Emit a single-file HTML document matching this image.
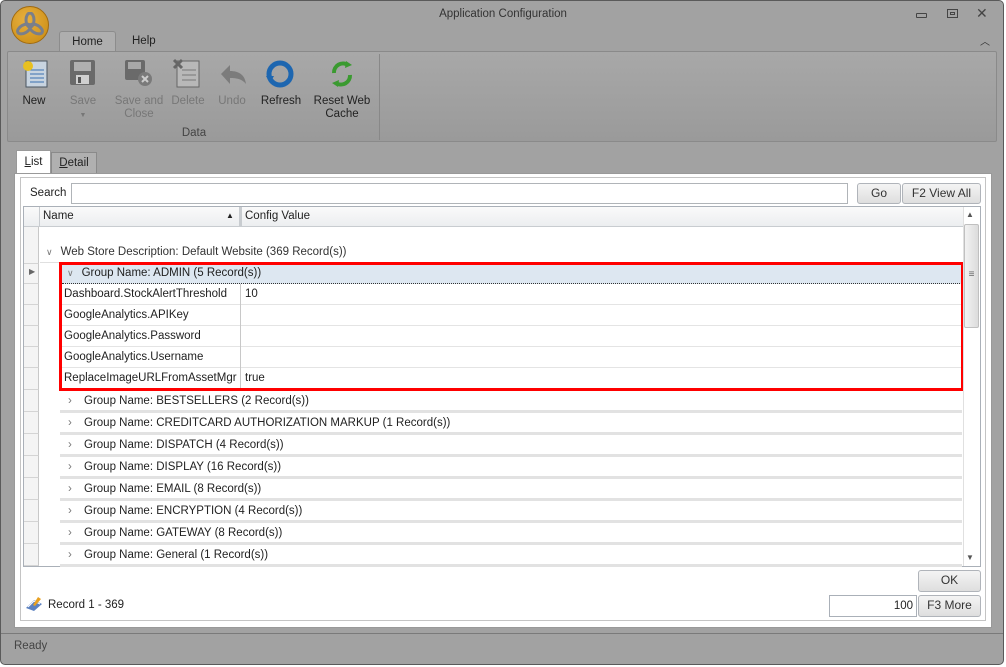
<!DOCTYPE html>
<html><head><style>
*{margin:0;padding:0;box-sizing:border-box}
body{width:1006px;height:667px;background:#fff;font-family:"Liberation Sans",sans-serif;font-size:11px;color:#222;position:relative;overflow:hidden}
.a{position:absolute}
.win{left:0;top:0;width:1004px;height:665px;background:#a2a2a2;border:1px solid #5a5a5a;border-radius:5px}
.btn{position:absolute;background:linear-gradient(#f4f4f4,#dedede);border:1px solid #b0b4ba;border-radius:3px;text-align:center;font-size:12px;color:#333;line-height:19px}
.rl{position:absolute;font-size:11.5px;text-align:center;line-height:13px}
.row{position:absolute;left:60px;width:902px;height:21px;border-bottom:1px solid #e4e4e4;font-size:11.5px;line-height:20px}
.grp{position:absolute;left:60px;width:902px;height:22px;border-bottom:3px solid #e2e2e2;font-size:11.5px;line-height:20px}
.ind{position:absolute;left:24px;width:15px;border-bottom:1px solid #d4d4d4;border-right:1px solid #c8c8c8;background:#f4f4f4}
</style></head><body>
<div class="a win"></div>
<!-- title -->
<div class="a" style="left:11px;top:6px;width:38px;height:38px;border-radius:50%;background:radial-gradient(circle at 40% 35%,#e8b040,#c88a10);border:1px solid #a06a10"></div>
<svg class="a" style="left:14px;top:12px" width="32" height="26" viewBox="0 0 32 26"><g fill="none" stroke="#7a7f8a" stroke-width="3"><ellipse cx="16" cy="8" rx="4" ry="7"/><ellipse cx="10" cy="17" rx="7" ry="4" transform="rotate(-30 10 17)"/><ellipse cx="22" cy="17" rx="7" ry="4" transform="rotate(30 22 17)"/></g></svg>
<div class="a" style="left:0;top:8px;width:1006px;text-align:center;font-size:11.5px;color:#333">Application Configuration</div>
<div class="a" style="left:916px;top:13px;width:11px;height:5px;border:1px solid #444;border-radius:1px"></div>
<div class="a" style="left:947px;top:9px;width:11px;height:9px;border:1px solid #444"><div style="margin:2px 2px;width:5px;height:3px;border:1px solid #444"></div></div>
<div class="a" style="left:976px;top:5px;font-size:14px;color:#444">✕</div>
<div class="a" style="left:980px;top:33px;font-size:10px;color:#333">︿</div>
<!-- tabs -->
<div class="a" style="left:59px;top:31px;width:57px;height:21px;background:#aeaeae;border:1px solid #8c8c8c;border-bottom:none;border-radius:3px 3px 0 0;text-align:center;line-height:20px;font-size:11.5px">Home</div>
<div class="a" style="left:132px;top:35px;font-size:11.5px">Help</div>
<!-- ribbon -->
<div class="a" style="left:7px;top:51px;width:990px;height:91px;background:linear-gradient(#a8a8a8,#9a9a9a);border:1px solid #8a8a8a;border-radius:2px"></div>
<div class="a" style="left:379px;top:54px;width:1px;height:86px;background:#888"></div>
<!-- icons -->
<svg class="a" style="left:19px;top:58px" width="32" height="32"><rect x="7" y="3" width="21" height="26" fill="#c8d4e0" stroke="#4a5560"/><g stroke="#3a70b0"><line x1="11" y1="12" x2="25" y2="12"/><line x1="11" y1="16" x2="25" y2="16"/><line x1="11" y1="20" x2="25" y2="20"/><line x1="11" y1="24" x2="25" y2="24"/></g><circle cx="9" cy="8" r="5" fill="#e8c020"/></svg>
<svg class="a" style="left:68px;top:58px" width="30" height="30"><rect x="2" y="2" width="25" height="25" rx="2" fill="#6a6a6a"/><rect x="6" y="4" width="17" height="9" fill="#b0b0b0"/><rect x="8" y="17" width="13" height="9" fill="#d0d0d0"/><rect x="10" y="19" width="3" height="6" fill="#555"/></svg>
<svg class="a" style="left:124px;top:58px" width="30" height="30"><rect x="1" y="2" width="20" height="20" rx="2" fill="#6a6a6a"/><rect x="4" y="4" width="13" height="7" fill="#a8a8a8"/><circle cx="21" cy="21" r="7" fill="#7a7a7a"/><path d="M18 18l6 6M24 18l-6 6" stroke="#ccc" stroke-width="2"/></svg>
<svg class="a" style="left:172px;top:58px" width="30" height="30"><rect x="5" y="3" width="22" height="26" fill="#b8b8b8" stroke="#666"/><g stroke="#777"><line x1="10" y1="12" x2="24" y2="12"/><line x1="10" y1="17" x2="24" y2="17"/><line x1="10" y1="22" x2="24" y2="22"/></g><path d="M2 2l8 8M10 2l-8 8" stroke="#666" stroke-width="3"/></svg>
<svg class="a" style="left:217px;top:62px" width="32" height="26"><path d="M4 12l9-9v6c9 0 15 4 16 13-4-5-9-6-16-6v6z" fill="#7c7c7c"/></svg>
<svg class="a" style="left:265px;top:59px" width="30" height="30"><circle cx="15" cy="15" r="11" fill="none" stroke="#1d66b0" stroke-width="5"/><path d="M1 17l8 0-4 7z" fill="#1d66b0"/></svg>
<svg class="a" style="left:326px;top:59px" width="32" height="30"><path d="M8 14a9 9 0 0 1 14-8" fill="none" stroke="#3a9a30" stroke-width="4"/><path d="M20 2l6 4-7 3z" fill="#3a9a30"/><path d="M24 16a9 9 0 0 1-14 8" fill="none" stroke="#3a9a30" stroke-width="4"/><path d="M12 28l-6-4 7-3z" fill="#3a9a30"/></svg>
<div class="rl" style="left:19px;top:95px;width:30px">New</div>
<div class="rl" style="left:66px;top:95px;width:34px;color:#777">Save<br><span style="font-size:7px">▼</span></div>
<div class="rl" style="left:114px;top:95px;width:50px;color:#777">Save and<br>Close</div>
<div class="rl" style="left:168px;top:95px;width:40px;color:#777">Delete</div>
<div class="rl" style="left:214px;top:95px;width:36px;color:#777">Undo</div>
<div class="rl" style="left:258px;top:95px;width:46px">Refresh</div>
<div class="rl" style="left:310px;top:95px;width:64px">Reset Web<br>Cache</div>
<div class="rl" style="left:174px;top:127px;width:40px;color:#444">Data</div>
<!-- doc tabs -->
<div class="a" style="left:16px;top:150px;width:35px;height:24px;background:#fff;border:1px solid #999;border-bottom:none;text-align:center;line-height:22px;font-size:11.5px"><u>L</u>ist</div>
<div class="a" style="left:51px;top:152px;width:46px;height:21px;background:#b0b0b0;border:1px solid #8a8a8a;border-bottom:none;text-align:center;line-height:20px;font-size:11.5px"><u>D</u>etail</div>
<div class="a" style="left:14px;top:173px;width:978px;height:455px;background:#fff;border:1px solid #999"></div>
<div class="a" style="left:20px;top:177px;width:966px;height:444px;border:1px solid #c4c4c4"></div>
<!-- search -->
<div class="a" style="left:30px;top:187px;font-size:11.5px">Search</div>
<div class="a" style="left:71px;top:183px;width:777px;height:21px;border:1px solid #b0b4b8"></div>
<div class="btn" style="left:857px;top:183px;width:44px;height:21px">Go</div>
<div class="btn" style="left:902px;top:183px;width:79px;height:21px">F2 View All</div>
<!-- grid -->
<div class="a" style="left:23px;top:206px;width:958px;height:361px;border:1px solid #aab0b8"></div>
<div class="a" style="left:24px;top:207px;width:939px;height:20px;background:linear-gradient(#fafafa,#eceef0);border-bottom:1px solid #c8ccd0"></div>
<div class="a" style="left:39px;top:207px;width:1px;height:20px;background:#c8ccd0"></div>
<div class="a" style="left:239px;top:207px;width:3px;height:20px;background:#c8ccd0"></div>
<div class="a" style="left:43px;top:210px;font-size:11.5px">Name</div>
<div class="a" style="left:226px;top:211px;font-size:8px">▲</div>
<div class="a" style="left:245px;top:210px;font-size:11.5px">Config Value</div>
<!-- indicator col -->
<div class="ind" style="top:227px;height:37px"></div>
<div class="ind" style="top:264px;height:20px"><span style="position:absolute;left:5px;top:3px;font-size:8px;color:#666">▶</span></div>
<div class="ind" style="top:284px;height:21px"></div>
<div class="ind" style="top:305px;height:21px"></div>
<div class="ind" style="top:326px;height:21px"></div>
<div class="ind" style="top:347px;height:21px"></div>
<div class="ind" style="top:368px;height:22px"></div>
<div class="ind" style="top:390px;height:22px"></div>
<div class="ind" style="top:412px;height:22px"></div>
<div class="ind" style="top:434px;height:22px"></div>
<div class="ind" style="top:456px;height:22px"></div>
<div class="ind" style="top:478px;height:22px"></div>
<div class="ind" style="top:500px;height:22px"></div>
<div class="ind" style="top:522px;height:22px"></div>
<div class="ind" style="top:544px;height:22px"></div>
<div class="a" style="left:40px;top:262px;width:20px;height:1px;background:#e0e0e0"></div>
<div class="a" style="left:46px;top:246px;font-size:11.5px;color:#333"><span style="color:#777;font-size:9px;margin-right:8px">∨</span>Web Store Description: Default Website (369 Record(s))</div>
<!-- admin -->
<div class="a" style="left:62px;top:264px;width:900px;height:20px;background:#dde7f1;border-bottom:1px dotted #333"></div>
<div class="a" style="left:67px;top:267px;font-size:11.5px"><span style="color:#777;font-size:9px;margin-right:8px">∨</span>Group Name: ADMIN (5 Record(s))</div>
<div class="row" style="top:284px"><span style="position:absolute;left:4px">Dashboard.StockAlertThreshold</span><span style="position:absolute;left:185px">10</span></div>
<div class="row" style="top:305px"><span style="position:absolute;left:4px">GoogleAnalytics.APIKey</span></div>
<div class="row" style="top:326px"><span style="position:absolute;left:4px">GoogleAnalytics.Password</span></div>
<div class="row" style="top:347px"><span style="position:absolute;left:4px">GoogleAnalytics.Username</span></div>
<div class="row" style="top:368px"><span style="position:absolute;left:4px">ReplaceImageURLFromAssetMgr</span><span style="position:absolute;left:185px">true</span></div>
<div class="a" style="left:240px;top:284px;width:1px;height:105px;background:#c8c8c8"></div>
<div class="a" style="left:59px;top:262px;width:905px;height:129px;border:3px solid #f00"></div>
<!-- groups -->
<div class="grp" style="top:391px"><span style="position:absolute;left:8px;color:#777">›</span><span style="position:absolute;left:24px">Group Name: BESTSELLERS (2 Record(s))</span></div>
<div class="grp" style="top:413px"><span style="position:absolute;left:8px;color:#777">›</span><span style="position:absolute;left:24px">Group Name: CREDITCARD AUTHORIZATION MARKUP (1 Record(s))</span></div>
<div class="grp" style="top:435px"><span style="position:absolute;left:8px;color:#777">›</span><span style="position:absolute;left:24px">Group Name: DISPATCH (4 Record(s))</span></div>
<div class="grp" style="top:457px"><span style="position:absolute;left:8px;color:#777">›</span><span style="position:absolute;left:24px">Group Name: DISPLAY (16 Record(s))</span></div>
<div class="grp" style="top:479px"><span style="position:absolute;left:8px;color:#777">›</span><span style="position:absolute;left:24px">Group Name: EMAIL (8 Record(s))</span></div>
<div class="grp" style="top:501px"><span style="position:absolute;left:8px;color:#777">›</span><span style="position:absolute;left:24px">Group Name: ENCRYPTION (4 Record(s))</span></div>
<div class="grp" style="top:523px"><span style="position:absolute;left:8px;color:#777">›</span><span style="position:absolute;left:24px">Group Name: GATEWAY (8 Record(s))</span></div>
<div class="grp" style="top:545px"><span style="position:absolute;left:8px;color:#777">›</span><span style="position:absolute;left:24px">Group Name: General (1 Record(s))</span></div>
<!-- scrollbar -->
<div class="a" style="left:963px;top:207px;width:17px;height:359px;background:#fff;border-left:1px solid #e0e0e0"></div>
<div class="a" style="left:966px;top:210px;font-size:8px;color:#555">▲</div>
<div class="a" style="left:966px;top:553px;font-size:8px;color:#555">▼</div>
<div class="a" style="left:964px;top:224px;width:15px;height:104px;background:linear-gradient(90deg,#f2f2f2,#dcdcdc);border:1px solid #c0c0c0;border-radius:2px;text-align:center;line-height:100px;color:#666;font-size:10px">≡</div>
<!-- bottom -->
<div class="btn" style="left:918px;top:570px;width:63px;height:22px">OK</div>
<div class="a" style="left:829px;top:595px;width:88px;height:22px;border:1px solid #aab0b8;text-align:right;padding-right:3px;line-height:20px;font-size:11.5px">100</div>
<div class="btn" style="left:918px;top:595px;width:63px;height:22px">F3 More</div>
<svg class="a" style="left:25px;top:596px" width="18" height="16"><path d="M1 12l8-8 8 4-8 7z" fill="#5a80c0"/><path d="M3 11l6-6 6 3" stroke="#fff" fill="none"/><path d="M13 1l3 2-6 7-2-1z" fill="#e8a020"/></svg>
<div class="a" style="left:48px;top:599px;font-size:11.5px">Record 1 - 369</div>
<!-- status -->
<div class="a" style="left:1px;top:633px;width:1002px;height:1px;background:#7a7a7a"></div>
<div class="a" style="left:14px;top:640px;font-size:11.5px;color:#444">Ready</div>
</body></html>
